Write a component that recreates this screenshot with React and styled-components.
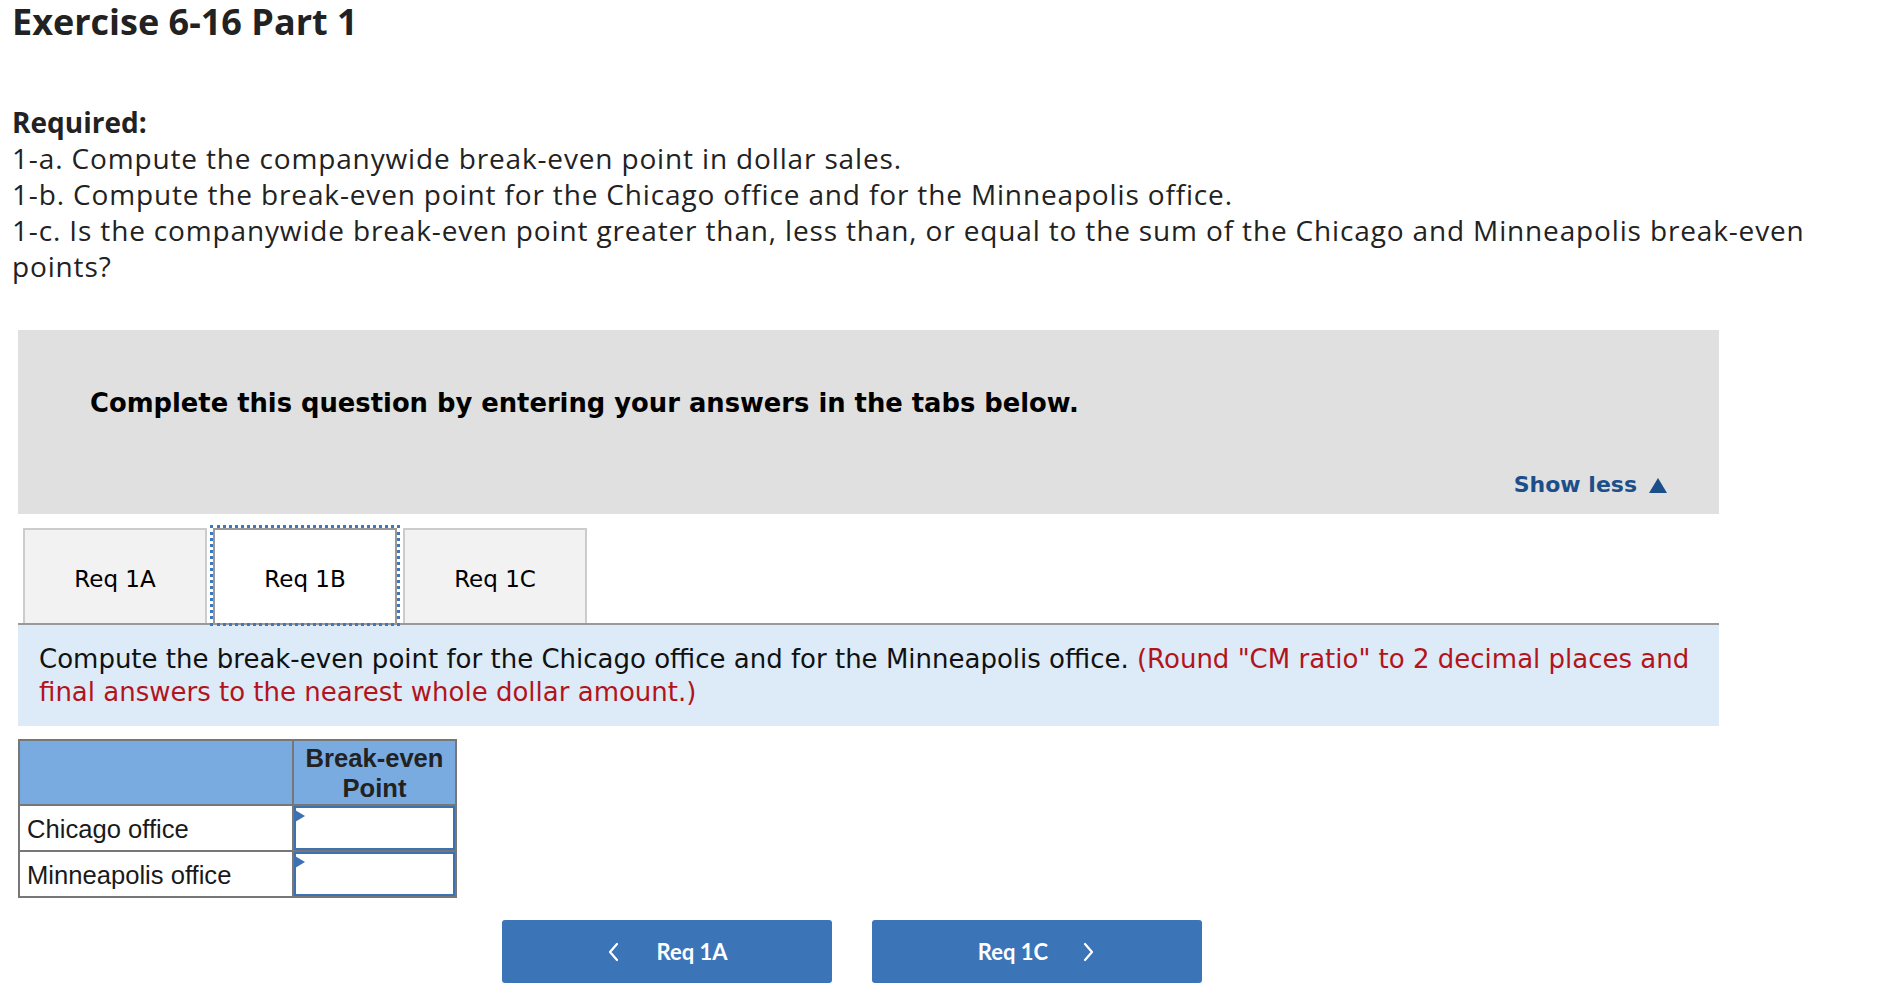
import React from "react";
import styled, { createGlobalStyle } from "styled-components";

const GlobalStyle = createGlobalStyle`
  body {
    margin: 0;
    background: #fff;
    color: #222;
    font-family: "Open Sans", Lato, sans-serif;
  }
`;

const Page = styled("div")`
  padding-bottom: 13px;
`;

const Intro = styled("div")`
  padding-left: 12px;
  max-width: 1860px;
`;

const Title = styled("h1")`
  margin: 0;
  padding-top: 2px;
  font-size: 36px;
  line-height: 40px;
  font-weight: 700;
  color: #222;
`;

const Required = styled("div")`
  margin-top: 62px;
  font-size: 28px;
  line-height: 36px;
  letter-spacing: 0.85px;
  color: #222;
`;

const RequiredLabel = styled("div")`
  font-weight: 700;
  letter-spacing: 0;
`;

const Main = styled("div")`
  margin: 46px 0 0 18px;
  width: 1701px;
`;

const InfoBox = styled("div")`
  background: #e0e0e0;
  padding: 58px 52px 16px 72px;
  font-family: "DejaVu Sans", Verdana, sans-serif;
`;

const InfoTitle = styled("div")`
  font-size: 25.8px;
  line-height: 30px;
  font-weight: 700;
  color: #000;
`;

const ShowLess = styled("div")`
  margin-top: 54px;
  display: flex;
  justify-content: flex-end;
  align-items: center;
  gap: 12px;
  font-size: 22px;
  line-height: 26px;
  font-weight: 700;
  color: #1c4e8a;
`;

const TabRow = styled("div")`
  margin-top: 14px;
  padding-left: 5px;
  display: flex;
  gap: 6px;
`;

const Tab = styled("div")`
  position: relative;
  z-index: 1;
  box-sizing: border-box;
  width: 184px;
  height: 95px;
  display: flex;
  align-items: center;
  justify-content: center;
  padding-top: 4px;
  border: 2px solid ${(p) => (p.active ? "#999" : "#ccc")};
  border-bottom: none;
  background: ${(p) => (p.active ? "#fff" : "#f2f2f2")};
  font-family: "DejaVu Sans", Tahoma, sans-serif;
  font-size: 23px;
  color: #000;

  ${(p) =>
    p.active &&
    `
    &::after {
      content: "";
      position: absolute;
      top: -5px;
      left: -5px;
      right: -5px;
      bottom: -3px;
      border: 3px dotted #3c78c0;
      pointer-events: none;
    }
  `}
`;

const Instruction = styled("div")`
  background: #dcebf7;
  border-top: 2px solid #999;
  padding: 18px 21px 17px;
  font-family: "DejaVu Sans", Verdana, sans-serif;
  font-size: 26px;
  line-height: 33px;
  color: #111;
`;

const Note = styled("span")`
  color: #b3141c;
`;

const Table = styled("table")`
  margin-top: 13px;
  border-collapse: collapse;
  width: 439px;
  font-family: "Liberation Sans", Arial, sans-serif;
  font-size: 25.6px;
  color: #222;
`;

const HeadCell = styled("th")`
  border: 2px solid #777;
  background: #79abe1;
  height: 63px;
  padding: 0;
  font-weight: 700;
  line-height: 30px;
  text-align: center;
  width: ${(p) => p.width || "auto"};
`;

const LabelCell = styled("td")`
  border: 2px solid #777;
  height: 42px;
  padding: 2px 0 0 7px;
  line-height: 30px;
  color: #1a1a1a;
`;

const InputCell = styled("td")`
  border: 2px solid #777;
  padding: 0;
  position: relative;
`;

const AnswerBox = styled("div")`
  box-sizing: border-box;
  height: 44px;
  border: 2px solid #3c72b4;
  background: #fff;
`;

const Marker = styled("span")`
  position: absolute;
  top: 4px;
  left: 1px;
  width: 0;
  height: 0;
  border-top: 6px solid transparent;
  border-bottom: 6px solid transparent;
  border-left: 10px solid #3c72b4;
`;

const NavRow = styled("div")`
  margin-top: 22px;
  padding-left: 484px;
  display: flex;
  gap: 40px;
`;

const NavButton = styled("button")`
  width: 330px;
  height: 63px;
  border: none;
  border-radius: 3px;
  background: #3b75b8;
  color: #fff;
  display: flex;
  align-items: center;
  justify-content: center;
  gap: ${(p) => p.gap}px;
  font-family: Lato, "Open Sans", sans-serif;
  font-size: 22px;
  font-weight: 700;
  cursor: pointer;
`;

const Chevron = ({ dir }) => (
  <svg width="14" height="20" viewBox="0 0 14 20">
    <path
      d={dir === "left" ? "M11 2 L4 10 L11 18" : "M3 2 L10 10 L3 18"}
      fill="none"
      stroke="#fff"
      strokeWidth="2.2"
      strokeLinecap="round"
      strokeLinejoin="round"
    />
  </svg>
);

const rows = ["Chicago office", "Minneapolis office"];

export default function App() {
  return (
    <Page>
      <GlobalStyle />
      <Intro>
        <Title>Exercise 6-16 Part 1</Title>
        <Required>
          <RequiredLabel>Required:</RequiredLabel>
          <div>1-a. Compute the companywide break-even point in dollar sales.</div>
          <div>1-b. Compute the break-even point for the Chicago office and for the Minneapolis office.</div>
          <div>
            1-c. Is the companywide break-even point greater than, less than, or equal to the sum of the
            Chicago and Minneapolis break-even points?
          </div>
        </Required>
      </Intro>

      <Main>
        <InfoBox>
          <InfoTitle>Complete this question by entering your answers in the tabs below.</InfoTitle>
          <ShowLess>
            Show less
            <svg width="18" height="15" viewBox="0 0 18 15">
              <path d="M9 0 L18 15 L0 15 Z" fill="#1c4e8a" />
            </svg>
          </ShowLess>
        </InfoBox>

        <TabRow>
          <Tab>Req 1A</Tab>
          <Tab active>Req 1B</Tab>
          <Tab>Req 1C</Tab>
        </TabRow>

        <Instruction>
          Compute the break-even point for the Chicago office and for the Minneapolis office.{" "}
          <Note>(Round "CM ratio" to 2 decimal places and final answers to the nearest whole dollar amount.)</Note>
        </Instruction>

        <Table>
          <thead>
            <tr>
              <HeadCell width="272px"></HeadCell>
              <HeadCell>
                Break-even
                <br />
                Point
              </HeadCell>
            </tr>
          </thead>
          <tbody>
            {rows.map((r) => (
              <tr key={r}>
                <LabelCell>{r}</LabelCell>
                <InputCell>
                  <AnswerBox />
                  <Marker />
                </InputCell>
              </tr>
            ))}
          </tbody>
        </Table>

        <NavRow>
          <NavButton gap={36}>
            <Chevron dir="left" />
            Req 1A
          </NavButton>
          <NavButton gap={34}>
            Req 1C
            <Chevron dir="right" />
          </NavButton>
        </NavRow>
      </Main>
    </Page>
  );
}
